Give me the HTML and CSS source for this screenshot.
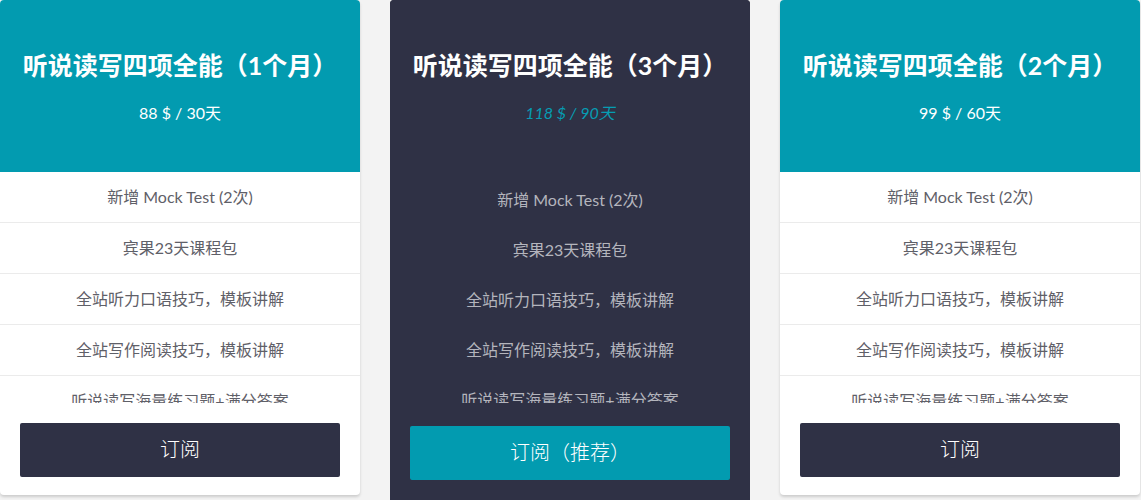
FILE: index.html
```html
<!DOCTYPE html>
<html lang="zh">
<head>
<meta charset="utf-8">
<title>订阅</title>
<link rel="stylesheet" href="styles.css">
</head>
<body>
<div class="plans">
  <div class="card">
    <div class="card-head">
      <h2 class="title">听说读写四项全能（1个月）</h2>
      <p class="price">88 $ / 30天</p>
    </div>
    <ul class="features">
      <li>新增 Mock Test (2次)</li>
      <li>宾果23天课程包</li>
      <li>全站听力口语技巧，模板讲解</li>
      <li>全站写作阅读技巧，模板讲解</li>
      <li>听说读写海量练习题+满分答案</li>
    </ul>
    <div class="action"><button class="btn">订阅</button></div>
  </div>
  <div class="card card-featured">
    <div class="card-head">
      <h2 class="title">听说读写四项全能（3个月）</h2>
      <p class="price">118 $ / 90天</p>
    </div>
    <ul class="features">
      <li>新增 Mock Test (2次)</li>
      <li>宾果23天课程包</li>
      <li>全站听力口语技巧，模板讲解</li>
      <li>全站写作阅读技巧，模板讲解</li>
      <li>听说读写海量练习题+满分答案</li>
    </ul>
    <div class="action"><button class="btn">订阅（推荐）</button></div>
  </div>
  <div class="card">
    <div class="card-head">
      <h2 class="title">听说读写四项全能（2个月）</h2>
      <p class="price">99 $ / 60天</p>
    </div>
    <ul class="features">
      <li>新增 Mock Test (2次)</li>
      <li>宾果23天课程包</li>
      <li>全站听力口语技巧，模板讲解</li>
      <li>全站写作阅读技巧，模板讲解</li>
      <li>听说读写海量练习题+满分答案</li>
    </ul>
    <div class="action"><button class="btn">订阅</button></div>
  </div>
</div>
</body>
</html>
```

FILE: styles.css
```css
* { box-sizing: border-box; }
html, body { margin: 0; padding: 0; }
body {
  background: #f3f3f3;
  font-family: Lato, "Noto Sans CJK SC", sans-serif;
  overflow: hidden;
  height: 500px;
}
.plans {
  display: flex;
  gap: 30px;
  align-items: flex-start;
}
.card {
  width: 360px;
  height: 495px;
  background: #fff;
  border-radius: 4px;
  box-shadow: 0 2px 3px rgba(0,0,0,0.16);
  overflow: hidden;
  display: flex;
  flex-direction: column;
}
.card-head {
  height: 172px;
  background: #029bb0;
  color: #fff;
  text-align: center;
  padding-top: 48px;
}
.title {
  margin: 0;
  font-size: 25px;
  line-height: 34px;
  font-weight: 700;
  white-space: nowrap;
}
.price {
  margin: 20px 0 0;
  font-size: 16px;
  line-height: 22px;
}
.features {
  list-style: none;
  margin: 0;
  padding: 0;
  height: 231px;
  overflow: hidden;
}
.features li {
  height: 51px;
  line-height: 50px;
  border-bottom: 1px solid #ebebeb;
  text-align: center;
  font-size: 16px;
  color: #5f6068;
  white-space: nowrap;
}
.action {
  padding: 20px 20px 0;
}
.btn {
  display: block;
  width: 100%;
  height: 54px;
  padding: 0 0 3px;
  border: none;
  border-radius: 2px;
  background: #2f3145;
  color: #fff;
  font-family: Lato, "Noto Sans CJK SC", sans-serif;
  font-size: 20px;
  font-weight: 300;
  cursor: pointer;
}
.card-featured {
  height: 520px;
  background: #2f3145;
  box-shadow: none;
}
.card-featured .card-head {
  background: #2f3145;
  height: 175px;
}
.card-featured .price {
  color: #069db3;
  font-style: italic;
}
.card-featured .features {
  height: 228px;
}
.card-featured .features li {
  height: 50px;
  border-bottom: none;
  color: #b4b5bd;
}
.card-featured .action {
  padding-top: 23px;
}
.card-featured .btn {
  background: #029bb0;
}
```
